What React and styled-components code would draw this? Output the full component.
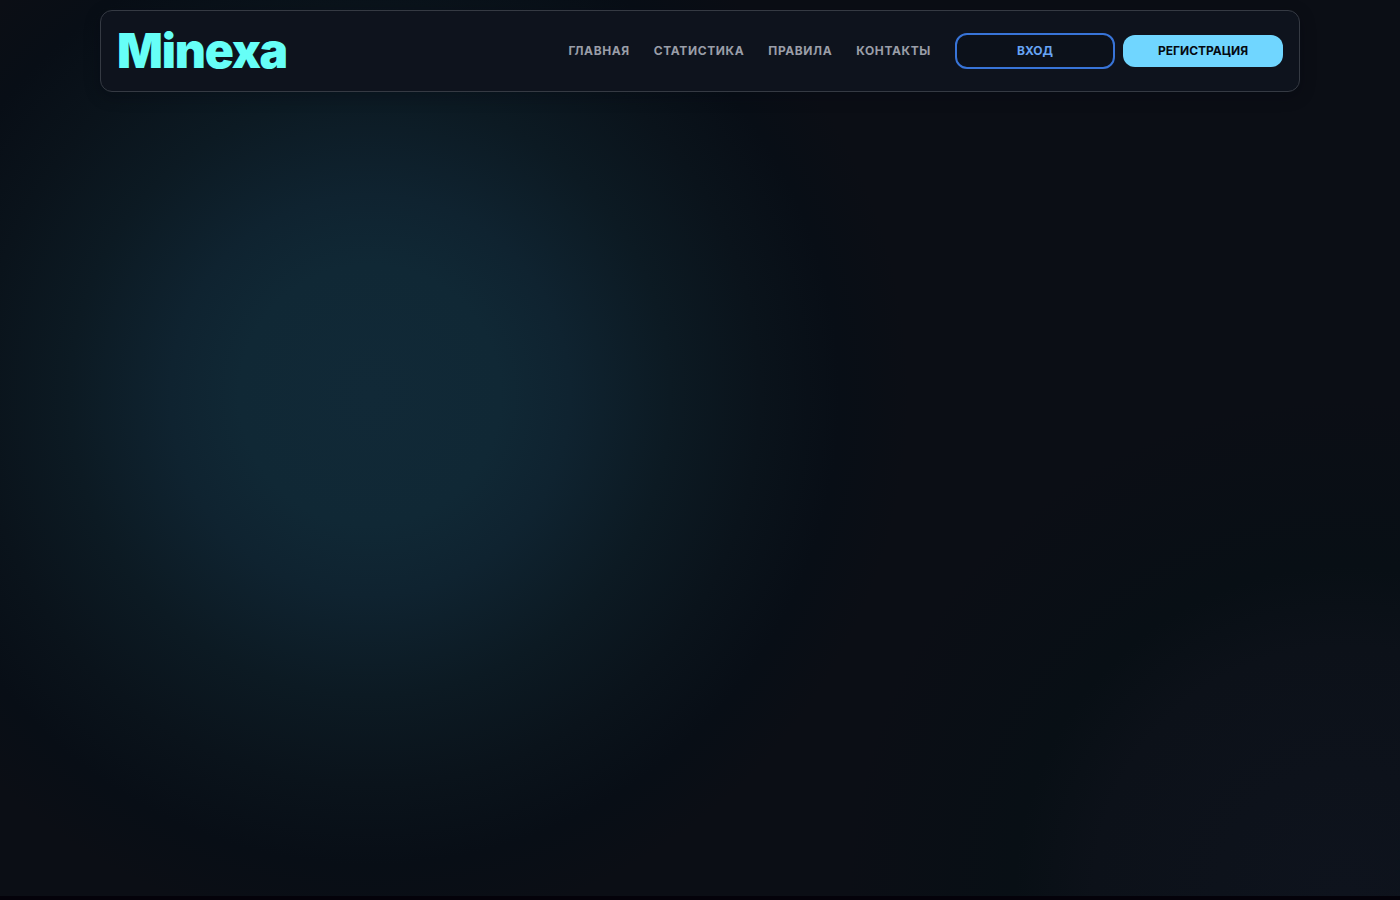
import React from 'react';
import styled, { createGlobalStyle } from 'styled-components';

const links = [
  { label: 'Главная', href: '#home' },
  { label: 'Статистика', href: '#stats' },
  { label: 'Правила', href: '#rules' },
  { label: 'Контакты', href: '#contacts' },
];

export default function App() {
  return (
    <>
      <GlobalStyle />
      <Page>
        <Header>
          <Logo href="#home">Minexa</Logo>
          <Menu>
            <Nav>
              {links.map(({ label, href }) => (
                <NavLink key={href} href={href}>{label}</NavLink>
              ))}
            </Nav>
            <Actions>
              <Button type="button" $outlined>Вход</Button>
              <Button type="button">Регистрация</Button>
            </Actions>
          </Menu>
        </Header>
      </Page>
    </>
  );
}

const GlobalStyle = createGlobalStyle`
  * {
    box-sizing: border-box;
  }
  body {
    margin: 0;
    background-color: #04020a;
    font-family: Inter, 'Liberation Sans', sans-serif;
  }
`;

const Page = styled.div`
  min-height: calc(100vh - 4px);
  padding: 10px 16px;
  background:
    radial-gradient(circle at 370px 395px, #112937 0, #102835 130px, #0f2330 200px, #0c1a23 300px, #0a131b 390px, #080e16 470px, rgba(11, 14, 21, 0) 540px),
    radial-gradient(circle at 96% 100%, #0e131d 0, #0c1119 250px, #080f15 330px, rgba(11, 14, 21, 0) 500px),
    #0b0e15;
`;

const Header = styled.header`
  display: flex;
  align-items: center;
  justify-content: space-between;
  max-width: 1200px;
  min-height: 82px;
  margin: 0 auto;
  padding: 8px 16px;
  border: 1px solid #353a43;
  border-radius: 12px;
  background-color: #0e131d;
  box-shadow: 0 4px 16px rgba(4, 8, 16, 0.3);
`;

const Logo = styled.a`
  color: #66fff7;
  font-size: 48px;
  font-weight: 900;
  line-height: 60px;
  letter-spacing: -0.025em;
  text-decoration: none;
`;

const Menu = styled.div`
  display: flex;
  align-items: center;
  gap: 24px;
`;

const Nav = styled.nav`
  display: flex;
  gap: 24px;
`;

const NavLink = styled.a`
  color: #9a9ea8;
  font-size: 12px;
  font-weight: 700;
  line-height: 16px;
  letter-spacing: 0.05em;
  text-transform: uppercase;
  text-decoration: none;
`;

const Actions = styled.div`
  display: flex;
  align-items: center;
  gap: 8px;
`;

const Button = styled.button`
  width: 160px;
  padding: 8px 16px;
  border: ${({ $outlined }) => ($outlined ? '2px solid #3874d8' : 'none')};
  border-radius: 12px;
  background-color: ${({ $outlined }) => ($outlined ? '#0c111a' : '#70d6ff')};
  color: ${({ $outlined }) => ($outlined ? '#67a4f4' : '#050a12')};
  font-family: inherit;
  font-size: 12px;
  font-weight: 700;
  line-height: 16px;
  text-transform: uppercase;
  cursor: pointer;
`;
